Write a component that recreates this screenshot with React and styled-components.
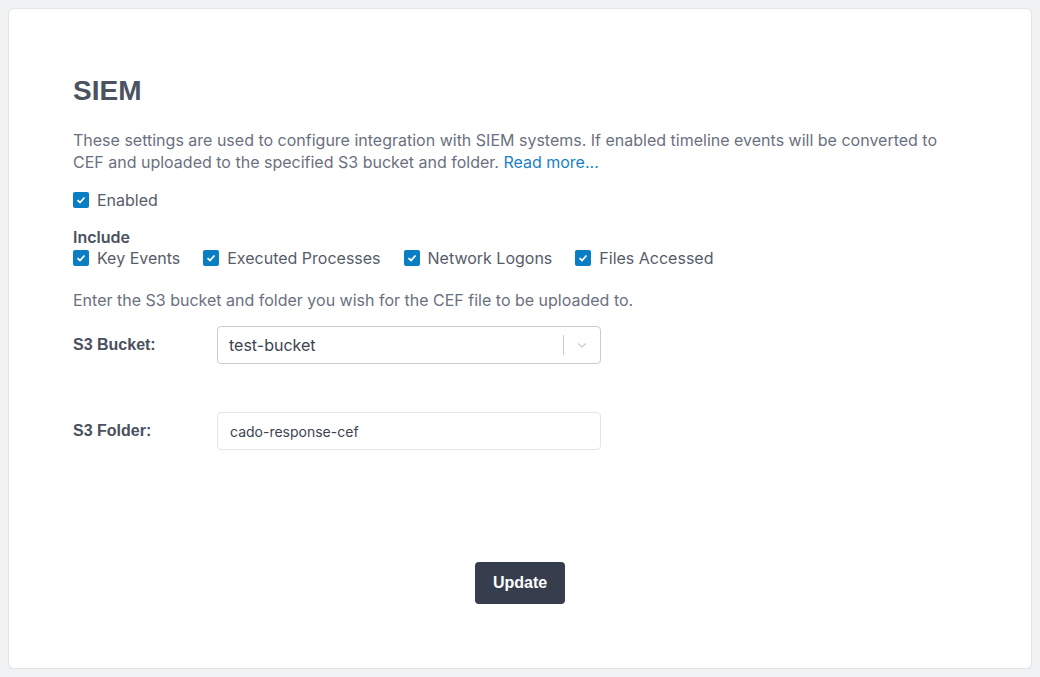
import React from "react";
import styled, { createGlobalStyle } from "styled-components";

const GlobalStyle = createGlobalStyle`
  body {
    margin: 8px;
    background: #f1f2f4;
    font-family: Inter, "Noto Sans", sans-serif;
  }
`;

const Card = styled.div`
  background: #ffffff;
  border: 1px solid #e3e5e8;
  border-radius: 6px;
  box-shadow: 0 1px 2px rgba(0, 0, 0, 0.05);
  height: 661px;
  box-sizing: border-box;
  padding: 62px 64px 0;
  display: flex;
  flex-direction: column;
`;

const Title = styled.h1`
  margin: 0 0 18px;
  font-family: "Liberation Sans", Arial, sans-serif;
  font-size: 28px;
  font-weight: 700;
  line-height: 40px;
  color: #4b5260;
`;

const Text = styled.p`
  margin: 0;
  font-size: 16px;
  line-height: 22px;
  color: #6b7080;
`;

const Link = styled.a`
  color: #1a7fc4;
  text-decoration: none;
`;

const Check = styled.span`
  width: 16px;
  height: 16px;
  border-radius: 2px;
  background: #0a7ec2;
  display: inline-flex;
  align-items: center;
  justify-content: center;
  flex-shrink: 0;
`;

const CheckItem = styled.label`
  display: inline-flex;
  align-items: center;
  gap: 8px;
  font-size: 16px;
  line-height: 20px;
  color: #565c6a;
`;

const CheckRow = styled.div`
  display: flex;
  gap: 23px;
  margin-top: ${(p) => p.$top || 0}px;
`;

const SubHead = styled.div`
  margin-top: 18px;
  font-size: 16px;
  font-weight: 600;
  line-height: 18px;
  color: #4a505d;
`;

const Hint = styled(Text)`
  margin-top: 21px;
`;

const FieldRow = styled.div`
  display: grid;
  grid-template-columns: 144px 384px;
  align-items: center;
  margin-top: ${(p) => p.$top}px;
`;

const Label = styled.div`
  font-family: "Liberation Sans", Arial, sans-serif;
  font-weight: 700;
  font-size: 16px;
  color: #4a505d;
`;

const Select = styled.div`
  height: 38px;
  box-sizing: border-box;
  border: 1px solid #cccccc;
  border-radius: 4px;
  display: flex;
  align-items: center;
  padding-left: 11px;
  font-size: 16px;
  color: #3d4350;
`;

const SelectValue = styled.span`
  flex: 1;
`;

const Separator = styled.span`
  width: 1px;
  height: 20px;
  background: #cccccc;
`;

const Indicator = styled.span`
  width: 36px;
  display: flex;
  justify-content: center;
  color: #cccccc;
`;

const Input = styled.input`
  height: 38px;
  box-sizing: border-box;
  border: 1px solid #e3e5e8;
  border-radius: 4px;
  padding: 0 12px;
  font-family: Inter, sans-serif;
  font-size: 14px;
  color: #3d4350;
  outline: none;
`;

const Footer = styled.div`
  display: flex;
  justify-content: center;
  margin-top: 112px;
`;

const Button = styled.button`
  width: 90px;
  height: 42px;
  border: none;
  border-radius: 4px;
  background: #363d4d;
  color: #ffffff;
  font-family: "Liberation Sans", Arial, sans-serif;
  font-weight: 700;
  font-size: 16px;
`;

const Box = ({ children }) => (
  <CheckItem>
    <Check>
      <svg width="10" height="10" viewBox="0 0 10 10">
        <path d="M1.5 5.2 L4 7.5 L8.5 2.5" fill="none" stroke="#fff" strokeWidth="1.8" />
      </svg>
    </Check>
    {children}
  </CheckItem>
);

const App = function () {
  return (
    <>
      <GlobalStyle />
      <Card>
        <Title>SIEM</Title>
        <Text>
          These settings are used to configure integration with SIEM systems. If
          enabled timeline events will be converted to CEF and uploaded to the
          specified S3 bucket and folder. <Link href="#">Read more...</Link>
        </Text>
        <CheckRow $top={17}>
          <Box>Enabled</Box>
        </CheckRow>
        <SubHead>Include</SubHead>
        <CheckRow $top={2}>
          <Box>Key Events</Box>
          <Box>Executed Processes</Box>
          <Box>Network Logons</Box>
          <Box>Files Accessed</Box>
        </CheckRow>
        <Hint>Enter the S3 bucket and folder you wish for the CEF file to be uploaded to.</Hint>
        <FieldRow $top={15}>
          <Label>S3 Bucket:</Label>
          <Select>
            <SelectValue>test-bucket</SelectValue>
            <Separator />
            <Indicator>
              <svg width="14" height="14" viewBox="0 0 14 14">
                <path d="M3 5.5 L7 9 L11 5.5" fill="none" stroke="currentColor" strokeWidth="1.3" />
              </svg>
            </Indicator>
          </Select>
        </FieldRow>
        <FieldRow $top={48}>
          <Label>S3 Folder:</Label>
          <Input defaultValue="cado-response-cef" />
        </FieldRow>
        <Footer>
          <Button>Update</Button>
        </Footer>
      </Card>
    </>
  );
};

export default App;
